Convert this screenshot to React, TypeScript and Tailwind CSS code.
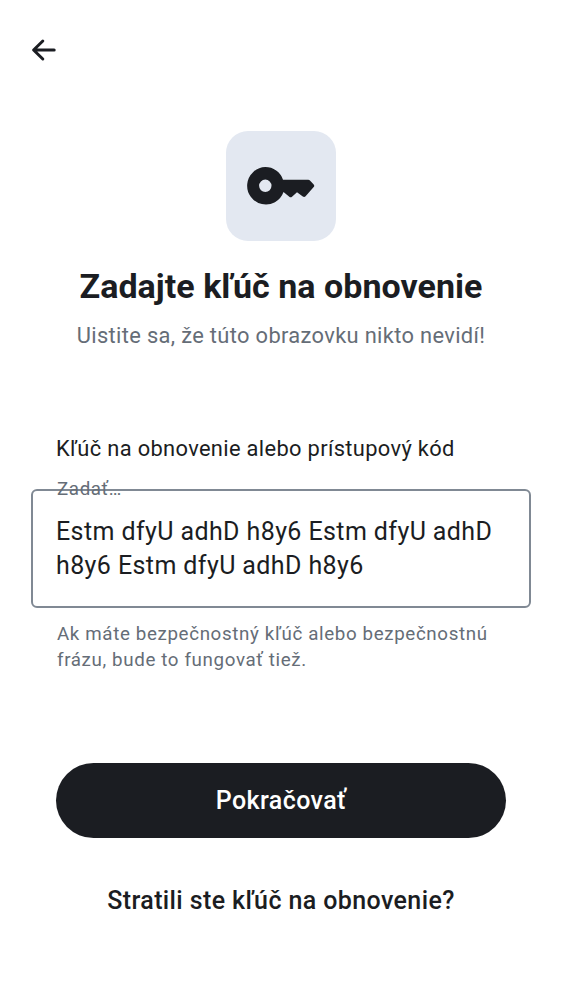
import React from "react";

function BackArrow() {
  return (
    <svg viewBox="0 0 38 38" className="h-[38px] w-[38px]" fill="none" stroke="#1b1d22" strokeWidth="3" strokeLinecap="round" strokeLinejoin="round">
      <path d="M17.8 10 8.6 19l9.2 9M9 19h20.2" />
    </svg>
  );
}

function KeyIcon() {
  return (
    <svg viewBox="0 0 110 110" className="h-[110px] w-[110px]">
      <path
        fill="#1b1d22"
        fillRule="evenodd"
        d="M39.3 36.1A18.7 18.7 0 0 1 57 48.7h25.3q.8 0 1.4.6l4 4.1q1.1 1.4 0 2.7l-8.1 9.1q-1.3 1.4-2.8.3L71 61.3l-5 4.5q-1.3 1.1-2.7 0L57.5 61A18.7 18.7 0 1 1 39.3 36.1m0 12.5a6.2 6.2 0 1 0 0 12.4 6.2 6.2 0 1 0 0-12.4"
      />
    </svg>
  );
}

export default function App() {
  return (
    <main className="flex h-[1000px] w-[562px] flex-col bg-white font-['Roboto',sans-serif] text-[#1b1d22]">
      <header className="h-[131px] px-[25px] pt-[31px]"><BackArrow /></header>
      <div className="flex h-[110px] w-[110px] items-center justify-center self-center rounded-[22px] bg-[#e3e8f1]"><KeyIcon /></div>
      <h1 className="mt-[22px] text-center text-[34px] leading-[46px] font-bold tracking-[0.04px]">Zadajte kľúč na obnovenie</h1>
      <p className="mt-[12px] text-center text-[21.875px] leading-[30px] tracking-[0.34px] text-[#656d77]">Uistite sa, že túto obrazovku nikto nevidí!</p>
      <label className="mt-[82px] pl-[56px] text-[21.875px] leading-[32px] tracking-[0.34px]">Kľúč na obnovenie alebo prístupový kód</label>
      <div className="relative mx-[31px] mt-[24px] h-[119px] rounded-[6px] border-2 border-[#808994] px-[23px] pt-[24px] text-[25px] leading-[34px] tracking-[0.4px]">
        <span className="absolute -top-[16px] left-[24px] text-[18.75px] leading-[28px] tracking-[0.6px] text-[#656d77]">Zadať…</span>
        <div>Estm dfyU adhD h8y6 Estm dfyU adhD<br />h8y6 Estm dfyU adhD h8y6</div>
      </div>
      <p className="mt-[13px] pl-[57px] text-[18.75px] leading-[26px] tracking-[0.63px] text-[#656d77]">Ak máte bezpečnostný kľúč alebo bezpečnostnú<br />frázu, bude to fungovať tiež.</p>
      <button className="mx-[56px] mt-[90px] h-[75px] rounded-full bg-[#1b1d22] text-[25px] font-medium tracking-[0.42px] text-white">Pokračovať</button>
      <button className="mt-[42px] h-[41px] self-center text-[25px] font-medium tracking-[0.39px]">Stratili ste kľúč na obnovenie?</button>
    </main>
  );
}
